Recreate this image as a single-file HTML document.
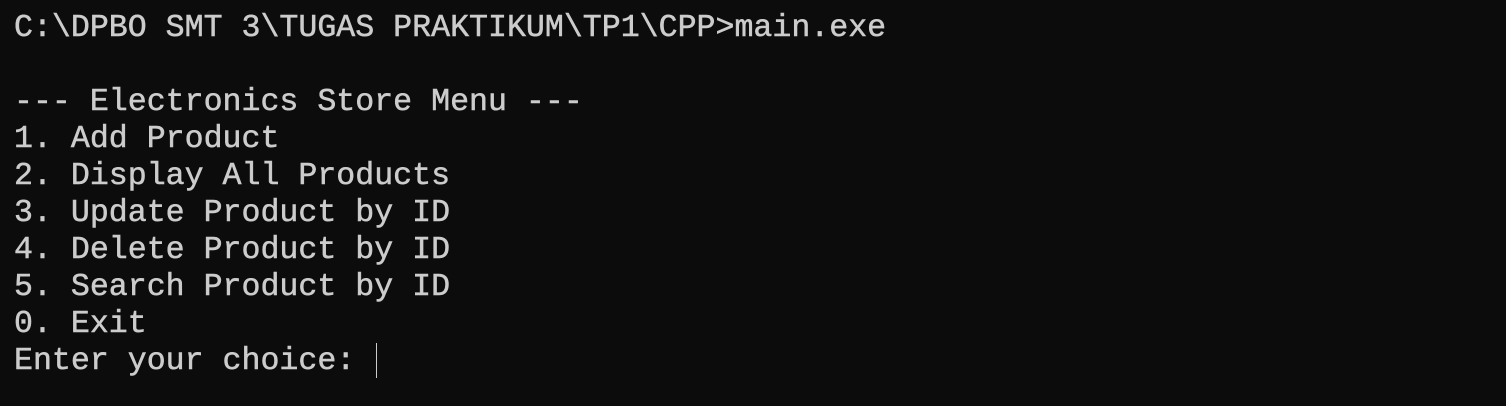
<!DOCTYPE html>
<html><head><meta charset="utf-8"><style>
html,body{margin:0;padding:0;background:#0c0c0c;width:1506px;height:406px;overflow:hidden}
pre{margin:0;padding:10px 0 0 14px;font-family:"Liberation Mono",monospace;font-size:31.6px;line-height:37px;color:#cccccc;white-space:pre;-webkit-text-stroke:0.5px #cccccc}
.cur{display:inline-block;width:1px;height:35px;background:#cccccc;vertical-align:-9px;margin-left:2px}
</style></head><body><pre>C:\DPBO SMT 3\TUGAS PRAKTIKUM\TP1\CPP>main.exe

--- Electronics Store Menu ---
1. Add Product
2. Display All Products
3. Update Product by ID
4. Delete Product by ID
5. Search Product by ID
0. Exit
Enter your choice: <span class="cur"></span></pre></body></html>
